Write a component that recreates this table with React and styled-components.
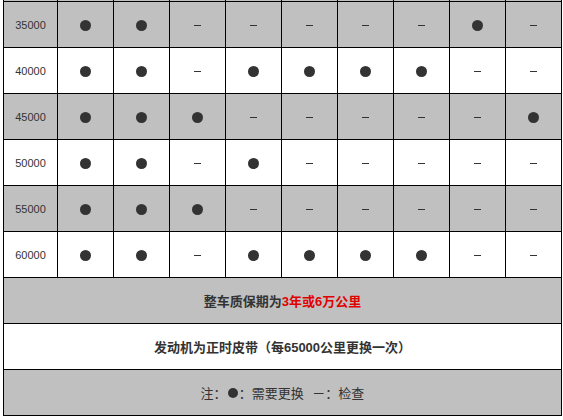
import React from "react";
import styled, { createGlobalStyle } from "styled-components";

const GlobalStyle = createGlobalStyle`
  html, body {
    margin: 0;
    padding: 0;
    background: #fff;
  }
  body {
    font-family: "Liberation Sans", "Noto Sans CJK SC", sans-serif;
  }
`;

const rows = [
  { km: "35000", marks: "11000001 0" },
  { km: "40000", marks: "110111100" },
  { km: "45000", marks: "111000001" },
  { km: "50000", marks: "110100000" },
  { km: "55000", marks: "111000000" },
  { km: "60000", marks: "110111100" },
];

const Page = styled.div`
  padding: 0 2px 0 3px;
`;

const Table = styled.table`
  border-collapse: collapse;
  table-layout: fixed;
  width: 558px;
`;

const Row = styled.tr`
  background: ${(p) => (p.$gray ? "#c0c0c0" : "#ffffff")};
`;

const StubCell = styled.td`
  height: 1px;
  padding: 0;
  border-left: 1px solid #000;
  border-right: 1px solid #000;
`;

const Cell = styled.td`
  height: 45px;
  padding: 0;
  border: 1px solid #000;
  text-align: center;
  vertical-align: middle;
  color: #333;
  font-size: 11px;
`;

const Dot = styled.span`
  display: inline-block;
  width: 11px;
  height: 11px;
  border-radius: 50%;
  background: #333;
  vertical-align: middle;
`;

const Dash = styled.span`
  display: inline-block;
  width: 7px;
  height: 1px;
  background: #333;
  vertical-align: middle;
`;

const Wide = styled.td`
  height: 45px;
  padding: 0;
  border: 1px solid #000;
  text-align: center;
  vertical-align: middle;
  color: #333;
  font-size: 13px;
  font-weight: ${(p) => (p.$bold ? 700 : 400)};
  font-family: "Noto Sans CJK SC", "Liberation Sans", sans-serif;
`;

const Red = styled.span`
  color: #e00000;
  font-family: "Liberation Sans", "Noto Sans CJK SC", sans-serif;
`;

const Num = styled.span`
  font-family: "Liberation Sans", sans-serif;
`;

const NoteDot = styled(Dot)`
  width: 10px;
  height: 10px;
  margin: 0 1px 2px;
`;

const cols = [54, 56, 56, 56, 56, 56, 56, 56, 56, 56];

export default function App() {
  return (
    <Page>
      <GlobalStyle />
      <Table>
        <colgroup>
          {cols.map((w, i) => (
            <col key={i} style={{ width: w }} />
          ))}
        </colgroup>
        <tbody>
          <Row $gray>
            {cols.map((_, i) => (
              <StubCell key={i} />
            ))}
          </Row>
          {rows.map((r, ri) => (
            <Row key={r.km} $gray={ri % 2 === 0}>
              <Cell>{r.km}</Cell>
              {r.marks
                .replace(/\s/g, "")
                .split("")
                .map((m, i) => (
                  <Cell key={i}>{m === "1" ? <Dot /> : <Dash />}</Cell>
                ))}
            </Row>
          ))}
          <Row $gray>
            <Wide colSpan={10} $bold>
              整车质保期为<Red>3年或6万公里</Red>
            </Wide>
          </Row>
          <Row>
            <Wide colSpan={10} $bold>
              发动机为正时皮带（每<Num>65000</Num>公里更换一次）
            </Wide>
          </Row>
          <Row $gray>
            <Wide colSpan={10}>
              注：<NoteDot />：需要更换&nbsp;&nbsp;&nbsp;－：检查
            </Wide>
          </Row>
        </tbody>
      </Table>
    </Page>
  );
}
